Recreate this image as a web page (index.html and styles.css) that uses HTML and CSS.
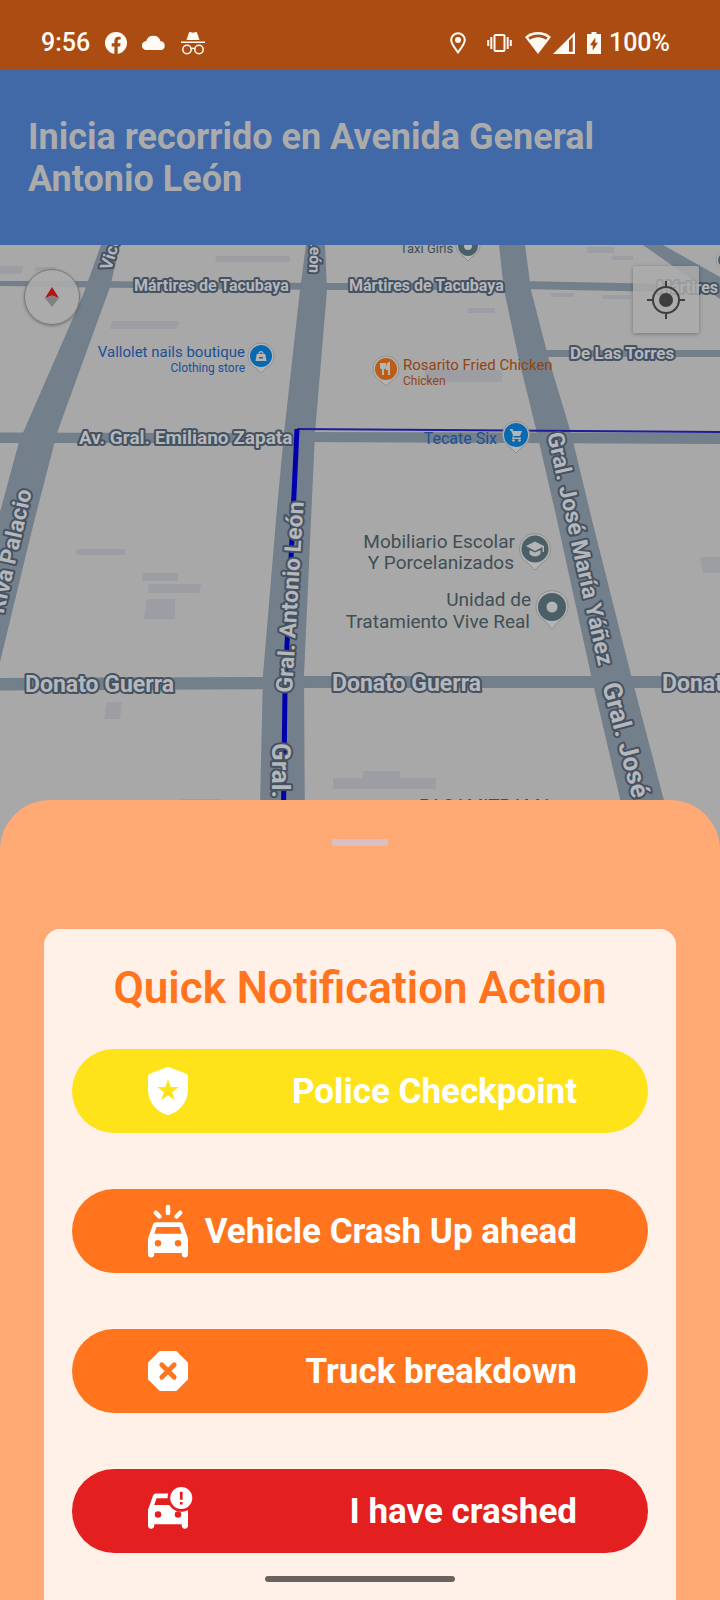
FILE: index.html
```html
<!DOCTYPE html>
<html lang="es">
<head>
<meta charset="utf-8">
<meta name="viewport" content="width=device-width, initial-scale=1">
<title>Quick Notification Action</title>
<link rel="stylesheet" href="styles.css">
</head>
<body>
<div class="screen">
  <div class="status">
    <div class="status-left">
      <span class="status-text">9:56</span>
      <svg class="ic-22" viewBox="0 0 22 22"><circle cx="11" cy="11" r="11" fill="currentColor"/><path class="cut" d="M9.4 22v-7.6H6.7v-3.1h2.700V9c0-2.8 1.6-4.3 4.100-4.300 1.200 0 2.200.2 2.200.2v2.700h-1.300c-1.300 0-1.700.8-1.700 1.600v2.100h2.900l-.5 3.100h-2.400V22z"/></svg>
      <svg class="ic-24" viewBox="0 0 24 16"><path fill="currentColor" d="M4.500 15a4.500 4.500 0 0 1-.3-9A7.500 7.500 0 0 1 18.500 6.200 4.500 4.500 0 0 1 19.500 15z"/></svg>
      <svg class="ic-24" viewBox="0 0 24 24"><path fill="currentColor" d="M5.500 9 8 1.500Q8.300.8 9 1l3 .8L15 1q.7-.2 1 .5L18.500 9zM0 10.500h24V12H0z"/><g fill="none" stroke="currentColor" stroke-width="1.500"><circle cx="6" cy="18.500" r="4.200"/><circle cx="18" cy="18.500" r="4.200"/><path d="M10 18q2-1.500 4 0"/></g></svg>
    </div>
    <div class="status-right">
      <svg class="ic-pin" viewBox="0 0 16 22"><path fill="none" stroke="currentColor" stroke-width="2" d="M8 20.300C4.500 15.800 1.200 11.800 1.200 8a6.800 6.800 0 0 1 13.600 0c0 3.800-3.300 7.800-6.800 12.300z"/><circle cx="8" cy="8" r="3" fill="currentColor"/></svg>
      <svg class="ic-vib" viewBox="0 0 25 20"><g fill="none" stroke="currentColor" stroke-width="2"><rect x="7.500" y="2" width="10" height="16" rx="1"/><path d="M4.300 4v12M1.200 7v6M20.700 4v12M23.800 7v6"/></g></svg>
      <svg class="ic-wifi" viewBox="0 0 26 22"><path fill="currentColor" d="M13 0C8 0 3.500 1.800 0 5l13 17L26 5C22.500 1.800 18 0 13 0z"/><path class="cut" d="M13 2.500c-3.600 0-6.900 1-9.700 3.100L5 7.800c2.300-1.600 5-2.500 8-2.500s5.700.9 8 2.500l1.700-2.200C19.900 3.500 16.600 2.500 13 2.500z"/></svg>
      <svg class="ic-sig" viewBox="0 0 22 22"><path fill="currentColor" d="M22 0v22H0z"/><path class="cut" d="M16 8.500l3.700-3.700v15H16z"/></svg>
      <svg class="ic-bat" viewBox="0 0 14 22"><path fill="currentColor" d="M4.500 0h5v2H14v20H0V2h4.500z"/><path class="cut" d="M8.300 5.500v5.300H11L5.700 18.500v-5.300H3z"/></svg>
      <span class="status-text">100%</span>
    </div>
  </div>

  <header class="directions">
    <h1>Inicia recorrido en Avenida General Antonio León</h1>
  </header>

  <main class="map">
    <svg class="map-canvas" viewBox="0 245 720 605" preserveAspectRatio="xMidYMin slice">
      <rect class="land" y="245" width="720" height="605"/>
      <g class="building">
        <path d="M0 266h24l-3 8H0zM36 267h20v4H34zM216 256h74v6h-75zM112 321h67l-2 8h-67zM76 549h49v6H76zM143 573h35v8h-36zM149 584h52l-2 9h-51zM147 599h28v20h-31zM107 702h15l-2 17h-16zM333 778h30v-7h37v7h36v11H333zM181 799h40v6h-40zM468 308h27v5h-28zM425 370h77v12h-77zM587 247h27v6h-27zM611 256h22v4h-20zM550 293h24v4h-22zM601 295h30v4h-28zM700 557h20v16h-17z"/>
      </g>
      <g class="road">
        <path d="M0 281l90 0 230 2v7L90 287.500 0 286zM320 283h190v7H320zM520 281l200 4v8l-200-4zM545 350h175v7H545zM0 432.500l300 1v9.500H0zM300 432l420 1v11l-420-2zM0 678l280-1v12l-280 1.500zM290 676h430v12H290zM643 245h20l57 32v22z"/>
        <path d="M101 245h19l-10 42-53 146-24 93L0 662V512l19-70 64-147z"/>
        <path d="M306 245h19l2 45-12 143-4 87-7 155 1 175h-46l4-175 13-155 8-87 16-143z"/>
        <path d="M499 245h26l6 45 18 70 22 73 21 87 39 155 46 175h-45l-41-175-34-155-20-87-18-73-15-70z"/>
      </g>
      <path class="route thin" d="M720 432l-423-3"/>
      <path class="route" d="M297 429l-12 260-2 161"/>

      <g class="street">
        <text class="s16" x="134" y="291">Mártires de Tacubaya</text>
        <text class="s16" x="349" y="291">Mártires de Tacubaya</text>
        <text class="s16" x="657" y="293">Mártires</text>
        <text class="s17" x="570" y="359">De Las Torres</text>
        <text class="s19" x="79" y="444">Av. Gral. Emiliano Zapata</text>
        <text class="s23" x="25" y="692">Donato Guerra</text>
        <text class="s23" x="332" y="691">Donato Guerra</text>
        <text class="s23" x="662" y="691">Donato</text>
        <text class="s17" transform="translate(111 271) rotate(-73)">Vice</text>
        <text class="s16" text-anchor="end" transform="translate(309 273) rotate(92)">León</text>
        <text class="s23" text-anchor="end" transform="translate(32 491) rotate(-77)">Riva Palacio</text>
        <text class="s23" transform="translate(292 693) rotate(-86.500)">Gral. Antonio León</text>
        <text class="s26" transform="translate(272 743) rotate(90)">Gral.</text>
        <text class="s23" transform="translate(547 434) rotate(77.500)">Gral. José María Yáñez</text>
        <text class="s26" transform="translate(602 685) rotate(75)">Gral. José</text>
      </g>

      <g class="poi">
        <text class="s13" x="400" y="253">Taxi Girls</text>
        <text class="s19" x="515" y="548" text-anchor="end">Mobiliario Escolar</text>
        <text class="s19" x="514" y="569" text-anchor="end">Y Porcelanizados</text>
        <text class="s19" x="531" y="606" text-anchor="end">Unidad de</text>
        <text class="s19" x="530" y="628" text-anchor="end">Tratamiento Vive Real</text>
        <text class="s19" x="419" y="812">PACAMITRAMA</text>
      </g>
      <g class="poi shop">
        <text class="s15" x="245" y="357" text-anchor="end">Vallolet nails boutique</text>
        <text class="s12" x="245" y="372" text-anchor="end">Clothing store</text>
        <text class="s16" x="497" y="444" text-anchor="end">Tecate Six</text>
      </g>
      <g class="poi food">
        <text class="s15" x="403" y="370">Rosarito Fried Chicken</text>
        <text class="s12" x="403" y="385">Chicken</text>
      </g>

      <g transform="translate(261 356)"><path class="pin" d="M0 17L-5 12A13 13 0 1 1 5 12z"/><circle class="fill-shop" r="11"/><path class="glyph" fill-rule="evenodd" d="M-5.500 5l1.200-7h1.800a2.500 3 0 0 1 5 0h1.800l1.200 7zM-1.300-2h2.600a1.300 1.700 0 0 0-2.600 0zM-2 1v1.500h4V1z"/></g>
      <g transform="translate(386 369)"><path class="pin" d="M0 17L-5 12A13 13 0 1 1 5 12z"/><circle class="fill-food" r="11"/><path class="glyph-line" d="M-3-6V6M-5-6v4q0 1.500 2 1.500T-1-2v-4M3 6V-6Q1-5 1 0h2"/></g>
      <g transform="translate(516 435)"><path class="pin" d="M0 18L-6 12A13.500 13.500 0 1 1 6 12z"/><circle class="fill-shop" r="12"/><path class="glyph" d="M-6-6h2.500l.8 2H6L4 1h-6l-.8 1.500H5V4h-9l1-3.500-2-5h-1z"/><circle class="glyph" cx="-2.500" cy="5.500" r="1.300"/><circle class="glyph" cx="3.500" cy="5.500" r="1.300"/></g>
      <g transform="translate(468 246)"><path class="pin" d="M0 15L-5 10A12 12 0 1 1 5 10z"/><circle class="fill-poi" r="10"/><circle class="glyph" r="4"/></g>
      <g transform="translate(535 549)"><path class="pin" d="M0 21L-7 14A15.500 15.500 0 1 1 7 14z"/><circle class="fill-poi" r="13.500"/><path class="glyph" d="M0-7.500L9-3v6H7.500v-5L0 2-9-3zM-5.500 1L0 3.500 5.500 1v4Q3 7.500 0 7.500T-5.500 5z"/></g>
      <g transform="translate(552 607)"><path class="pin" d="M0 22L-7 14A16 16 0 1 1 7 14z"/><circle class="fill-poi" r="14"/><circle class="glyph" r="5.500"/></g>
      <g transform="translate(725 260)"><circle class="pin" r="9"/><circle class="fill-poi" r="7"/></g>
    </svg>
    <button class="compass" aria-label="Compass">
      <svg viewBox="0 0 14 20"><path fill="#b31414" d="M7 0l7 11-7-2.500L0 11z"/><path fill="#818181" d="M0 11l7-2.500L14 11 7 20z"/></svg>
    </button>
    <button class="locate" aria-label="My location">
      <svg viewBox="0 0 38 38"><circle cx="19" cy="19" r="7" fill="#3d3d3d"/><path fill="none" stroke="#3d3d3d" stroke-width="2" d="M19 0v6M19 32v6M0 19h6M32 19h6M19 6a13 13 0 1 0 0 26 13 13 0 1 0 0-26z"/></svg>
    </button>
  </main>

  <section class="sheet">
    <div class="handle"></div>
    <div class="card">
      <h2>Quick Notification Action</h2>
      <button class="action police">
        <svg viewBox="0 0 24 24"><path fill="currentColor" fill-rule="evenodd" d="M11.500 2.500q.5-.2 1 0l6.600 2.500q.9.400.9 1.300V11.500c0 4.700-3.200 8.700-7.500 10q-.5.200-1 0C7.200 20.200 4 16.200 4 11.500V6.300Q4 5.400 4.900 5zM12 7.300l-1.100 3.100H7.700l2.600 2-1 3.300 2.700-2 2.700 2-1-3.300 2.600-2h-3.200z"/></svg>
        <span>Police Checkpoint</span>
      </button>
      <button class="action">
        <svg viewBox="0 0 24 24"><path fill="currentColor" fill-rule="evenodd" d="M6 9.400Q6.300 8.500 7.200 8.500h9.600q.9 0 1.200.9l2 5.600v6.300a1.200 1.200 0 0 1-2.500 0v-.5h-11v.5a1.200 1.200 0 0 1-2.500 0V15zM7.400 10.400l-.9 2.700h11l-.9-2.700zM8 15.600a1.300 1.300 0 1 0 0 2.600 1.300 1.300 0 1 0 0-2.600zM16 15.600a1.300 1.300 0 1 0 0 2.600 1.300 1.300 0 1 0 0-2.600z"/><path fill="none" stroke="currentColor" stroke-width="1.800" stroke-linecap="round" d="M12 2.400v2.400M7.100 4.700l1.500 1.500M16.900 4.700l-1.500 1.500"/></svg>
        <span>Vehicle Crash Up ahead</span>
      </button>
      <button class="action">
        <svg viewBox="0 0 24 24"><path fill="currentColor" stroke="currentColor" stroke-linejoin="round" d="M8.900 4.500h6.200l4.400 4.400v6.200l-4.400 4.400H8.900l-4.400-4.400V8.900z"/><path fill="none" stroke="#ff741c" stroke-width="1.900" stroke-linecap="round" d="M9.500 9.500l5 5M14.500 9.500l-5 5"/></svg>
        <span>Truck breakdown</span>
      </button>
      <button class="action crashed">
        <svg viewBox="0 0 24 24"><path fill="currentColor" fill-rule="evenodd" d="M6 5.900Q6.300 5 7.200 5h9.600q.9 0 1.200.9l2 5.600v6.300a1.200 1.200 0 0 1-2.500 0v-.5h-11v.5a1.200 1.200 0 0 1-2.500 0V11.500zM7.400 6.900L6.500 9.600h11l-.9-2.700zM8 12.100a1.300 1.300 0 1 0 0 2.600 1.300 1.300 0 1 0 0-2.600zM16 12.100a1.300 1.300 0 1 0 0 2.600 1.300 1.300 0 1 0 0-2.600z"/><circle cx="17.300" cy="6.800" r="5.500" fill="#e41f20"/><circle cx="17.300" cy="6.800" r="4.400" fill="currentColor"/><path fill="#e41f20" d="M16.750 4.300h1.100v3.200h-1.100zM16.750 8.400h1.100v1h-1.100z"/></svg>
        <span>I have crashed</span>
      </button>
      <div class="home-pill"></div>
    </div>
  </section>
</div>
</body>
</html>
```

FILE: styles.css
```css
* { box-sizing: border-box; }

body {
  margin: 0;
  background: #ffa975;
  font-family: Roboto, "Noto Sans", sans-serif;
}

h1, h2 { margin: 0; }

button {
  border: 0;
  padding: 0;
  font: inherit;
  color: inherit;
  cursor: pointer;
}

svg { display: block; flex: none; }

.screen {
  display: flex;
  flex-direction: column;
  min-height: 100vh;
}

/* Status bar */
.status {
  display: flex;
  justify-content: space-between;
  align-items: center;
  height: 70px;
  padding: 16px 50px 0 41px;
  background: #ab4d13;
  color: #fffaf4;
}

.status-left, .status-right { display: flex; align-items: center; }
.status-left { gap: 15px; }
.status-text { font: 500 25px/28px Roboto, sans-serif; }
.cut { fill: #ab4d13; }
.ic-22 { width: 22px; }
.ic-24 { width: 24px; }
.ic-pin { width: 16px; margin-right: 21px; }
.ic-vib { width: 25px; margin-right: 13px; }
.ic-wifi { width: 26px; margin-right: 2px; }
.ic-sig { width: 22px; margin-right: 12px; }
.ic-bat { width: 14px; margin-right: 8px; }

/* Directions banner */
.directions {
  padding: 46px 28px 45px;
  background: #4169a8;
  color: #ababab;
}

.directions h1 {
  font-size: 36px;
  font-weight: 700;
  line-height: 42px;
}

/* Map */
.map { position: relative; }
.map-canvas { width: 100%; height: 605px; }
.land { fill: #a8a8a8; }
.building { fill: #9d9ea4; }
.road { fill: #737f8a; }
.route { fill: none; stroke: #0000ad; stroke-width: 5; }
.route.thin { stroke: #1d1c9c; stroke-width: 2; }

.street {
  font-weight: 700;
  fill: #b4b7bb;
  stroke: #465261;
  stroke-width: 4;
  stroke-linejoin: round;
  paint-order: stroke;
}

.poi { fill: #3f4f55; }
.shop { fill: #204f96; }
.food { fill: #94430f; }
.s12 { font-size: 12px; }
.s13 { font-size: 13px; }
.s15 { font-size: 15px; }
.s16 { font-size: 16px; }
.s17 { font-size: 17px; }
.s19 { font-size: 19px; }
.s23 { font-size: 23px; }
.s26 { font-size: 26px; }

.pin { fill: #b4b4b4; stroke: #909090; stroke-width: 1; }
.fill-shop { fill: #0869b0; }
.fill-food { fill: #bd5c16; }
.fill-poi { fill: #4b5f67; }
.glyph { fill: #b4b4b4; }
.glyph-line { fill: none; stroke: #b4b4b4; stroke-width: 2; }

.compass, .locate {
  position: absolute;
  display: grid;
  place-items: center;
}

.compass {
  top: 24px;
  left: 24px;
  width: 56px;
  height: 56px;
  border: 1px solid #777;
  border-radius: 50%;
  background: rgba(171, 171, 171, 0.9);
  box-shadow: 0 1px 3px rgba(0, 0, 0, 0.3);
}

.compass svg { width: 14px; }

.locate {
  top: 21px;
  right: 21px;
  width: 66px;
  height: 67px;
  border-radius: 2px;
  background: rgba(172, 172, 172, 0.82);
  box-shadow: 0 1px 4px rgba(0, 0, 0, 0.3);
}

.locate svg { width: 38px; }

/* Bottom sheet */
.sheet {
  position: relative;
  display: flex;
  flex-direction: column;
  flex: 1;
  margin-top: -50px;
  padding: 39px 44px 0;
  border-radius: 50px 50px 0 0;
  background: #ffa975;
}

.handle {
  align-self: center;
  width: 56px;
  height: 7px;
  margin-bottom: 83px;
  border-radius: 2px;
  background: #dcbfc3;
}

.card {
  display: flex;
  flex-direction: column;
  flex: 1;
  gap: 56px;
  padding: 34px 28px 18px;
  border-radius: 16px 16px 0 0;
  background: #fff1e8;
}

.card h2 {
  margin-bottom: -20px;
  color: #ff741c;
  font-size: 44px;
  font-weight: 600;
  line-height: 50px;
  text-align: center;
}

.action {
  display: flex;
  align-items: center;
  justify-content: space-between;
  height: 84px;
  padding: 0 71px 0 66px;
  border-radius: 42px;
  background: #ff741c;
  color: #fff;
  font-size: 35px;
  font-weight: 700;
  white-space: nowrap;
}

.action svg { width: 60px; height: 60px; }
.police { background: #fee31a; }
.crashed { background: #e41f20; }

.home-pill {
  align-self: center;
  width: 190px;
  height: 6px;
  margin-top: -33px;
  border-radius: 3px;
  background: #68635f;
}
```
